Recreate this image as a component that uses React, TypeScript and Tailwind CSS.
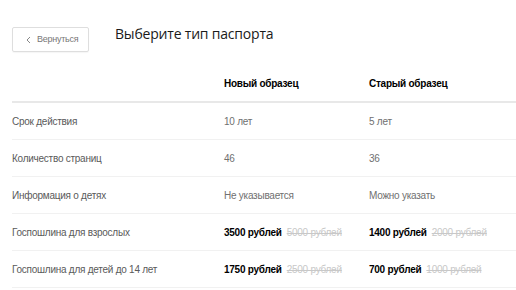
import React from "react";

interface IRow {
  label: string;
  newVal: React.ReactNode;
  oldVal: React.ReactNode;
}

const Price = ({ now, was }: { now: string; was: string }) => (
  <span>
    <span className="font-bold text-black">{now}</span>
    <span className="ml-[5px] text-[#c8c8c8] line-through">{was}</span>
  </span>
);

const rows: IRow[] = [
  { label: "Срок действия", newVal: "10 лет", oldVal: "5 лет" },
  { label: "Количество страниц", newVal: "46", oldVal: "36" },
  { label: "Информация о детях", newVal: "Не указывается", oldVal: "Можно указать" },
  {
    label: "Госпошлина для взрослых",
    newVal: <Price now="3500 рублей" was="5000 рублей" />,
    oldVal: <Price now="1400 рублей" was="2000 рублей" />,
  },
  {
    label: "Госпошлина для детей до 14 лет",
    newVal: <Price now="1750 рублей" was="2500 рублей" />,
    oldVal: <Price now="700 рублей" was="1000 рублей" />,
  },
];

const App = () => {
  return (
    <div className="w-[516px] h-[290px] bg-white overflow-hidden font-[family-name:Liberation_Sans,Arial,sans-serif] text-[10px] tracking-[-0.25px]">
      <div className="flex items-start pl-[12px] pt-[27px]">
        <button className="flex items-center w-[77px] h-[25px] border border-[#dedede] rounded-[2px] pl-[13px] text-[9px] text-[#777] shadow-[0_1px_1px_rgba(0,0,0,0.04)]">
          <svg width="5" height="8" viewBox="0 0 5 8" className="mr-[6px]">
            <path d="M4 1 1 4l3 3" fill="none" stroke="#888" strokeWidth="1" />
          </svg>
          Вернуться
        </button>
        <h1 className="ml-[26px] mt-[-4px] font-['Open_Sans',sans-serif] text-[14px] tracking-[-0.2px] leading-[22px] text-[#1a1a1a]">
          Выберите тип паспорта
        </h1>
      </div>

      <div className="ml-[12px] mt-[18px]">
        <div className="grid grid-cols-[212px_145px_1fr] h-[33px] items-center pb-[4px] border-b-2 border-[#e8e8e8] font-bold text-black">
          <div />
          <div>Новый образец</div>
          <div>Старый образец</div>
        </div>
        {rows.map((r) => (
          <div
            key={r.label}
            className="grid grid-cols-[212px_145px_1fr] h-[37px] items-center border-b border-[#f1f1f1] text-[#707070]"
          >
            <div className="text-[#5a5a5a]">{r.label}</div>
            <div>{r.newVal}</div>
            <div>{r.oldVal}</div>
          </div>
        ))}
      </div>
    </div>
  );
};

export default App;
